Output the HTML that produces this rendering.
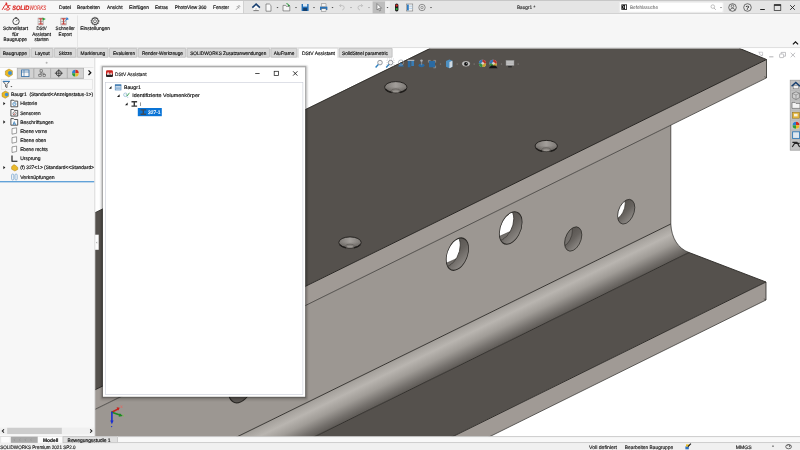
<!DOCTYPE html>
<html lang="de"><head><meta charset="utf-8"><title>SOLIDWORKS Premium 2021 SP2.0 - Baugr1</title>
<style>
html,body{margin:0;padding:0;background:#f4f4f4;overflow:hidden}
body{width:800px;height:450px}
svg{display:block;position:absolute;left:0;top:0;font-family:"Liberation Sans",sans-serif;will-change:transform}
text{white-space:pre;paint-order:stroke fill;stroke-linejoin:round}
</style></head><body>
<svg width="800" height="450" viewBox="0 0 800 450" text-rendering="geometricPrecision">
<g id="chrome-top">
<rect x="0" y="0" width="800" height="450" fill="#f4f4f4"/>
<rect x="0" y="0" width="800" height="14.4" fill="#e5e5e5"/>
<rect x="0" y="0" width="800" height="0.8" fill="#c0c0c0"/>
<rect x="0" y="1" width="243.4" height="12.4" fill="#f7f7f7"/>
<rect x="0" y="13.3" width="800" height="1.1" fill="#cbcbcb"/>
<rect x="243" y="1" width="0.7" height="12.4" fill="#c6c6c6"/>
<rect x="0" y="14.4" width="800" height="33.3" fill="#f6f6f6"/>
<rect x="0" y="14.4" width="800" height="0.8" fill="#fdfdfd"/>
<path d="M2.2,9.8 c1.4,-2.6 2.6,-4.8 4.6,-6.6 l-0.3,2 c1.6,-0.2 2.2,0.8 1.6,2 c-0.7,1.3 -2.3,2.1 -3.9,2.1 M5.4,3.2 l1.4,-0.4" fill="none" stroke="#dc1f1a" stroke-width="0.95"/>
<path d="M6.4,10 c2.2,0.2 3.3,-0.5 3.3,-1.4 c0,-1.1 -2.3,-0.8 -2.1,-2 c0.2,-0.9 1.5,-1.2 2.9,-1" fill="none" stroke="#dc1f1a" stroke-width="0.95"/>
<text x="12.20" y="9.94" font-size="6.4" fill="#dc1f1a" font-weight="bold" textLength="17.20" lengthAdjust="spacingAndGlyphs" font-style="italic" stroke="#dc1f1a" stroke-width="0.16">SOLID</text>
<text x="29.40" y="9.94" font-size="6.4" fill="#e03a34" textLength="16.80" lengthAdjust="spacingAndGlyphs" font-style="italic" stroke="#e03a34" stroke-width="0.08">WORKS</text>
<text x="59.00" y="9.45" font-size="5.0" fill="#111" textLength="12.00" lengthAdjust="spacingAndGlyphs" stroke="#111" stroke-width="0.16">Datei</text>
<text x="77.00" y="9.45" font-size="5.0" fill="#111" textLength="23.00" lengthAdjust="spacingAndGlyphs" stroke="#111" stroke-width="0.16">Bearbeiten</text>
<text x="107.00" y="9.45" font-size="5.0" fill="#111" textLength="15.50" lengthAdjust="spacingAndGlyphs" stroke="#111" stroke-width="0.16">Ansicht</text>
<text x="129.00" y="9.45" font-size="5.0" fill="#111" textLength="20.00" lengthAdjust="spacingAndGlyphs" stroke="#111" stroke-width="0.16">Einfügen</text>
<text x="155.00" y="9.45" font-size="5.0" fill="#111" textLength="13.00" lengthAdjust="spacingAndGlyphs" stroke="#111" stroke-width="0.16">Extras</text>
<text x="174.75" y="9.45" font-size="5.0" fill="#111" textLength="31.75" lengthAdjust="spacingAndGlyphs" stroke="#111" stroke-width="0.16">PhotoView 360</text>
<text x="213.00" y="9.45" font-size="5.0" fill="#111" textLength="16.00" lengthAdjust="spacingAndGlyphs" stroke="#111" stroke-width="0.16">Fenster</text>
<path d="M236,9.8 l1.6,-1.8 M237,6.4 l2,2 M237.6,7 l1.4,-1.6 l0.9,0.9 l-1.5,1.5" stroke="#6a6a6a" stroke-width="0.6" fill="none"/>
<path d="M253.4,7.4 v3.6 h5.4 v-3.6 l-2.7,-2.4 z" fill="#fafafa"/><path d="M253.4,10.6 h5.4" stroke="#6d6d6d" stroke-width="0.9"/><path d="M252.3,7.6 l3.8,-3.5 l3.8,3.5" fill="none" stroke="#173f70" stroke-width="1.5"/><path d="M255,9.4 q1.1,-1.4 2.2,0" fill="none" stroke="#888" stroke-width="0.5"/>
<path d="M266,4 h3.4 l1.6,1.6 v5.6 h-5 z" fill="#fafafa" stroke="#555" stroke-width="0.6"/>
<path d="M276.5,7.1 h2 l-1,1.2 z" fill="#444"/>
<path d="M283,5.4 h2.4 l0.8,0.9 h3.6 v4.6 h-6.8 z" fill="#f6f6f6" stroke="#555" stroke-width="0.6"/><path d="M286.4,3.6 q2.2,0 2.6,2.4 l-1,-0.2 m1,0.2 l0.5,-1" fill="none" stroke="#1e8c2f" stroke-width="0.9"/>
<path d="M295,7.1 h2 l-1,1.2 z" fill="#444"/>
<rect x="301.6" y="4" width="7" height="7" rx="0.6" fill="#1f6db5"/><rect x="303" y="4" width="4.2" height="2.6" fill="#dfe9f3"/><rect x="303.2" y="8" width="3.8" height="3" fill="#163f6b"/>
<path d="M313,7.1 h2 l-1,1.2 z" fill="#444"/>
<rect x="320" y="6.4" width="7.4" height="3.6" rx="0.5" fill="#2774bb"/><rect x="321.4" y="3.8" width="4.6" height="2.8" fill="#f2f2f2" stroke="#666" stroke-width="0.4"/><rect x="321.4" y="8.8" width="4.6" height="2.4" fill="#f2f2f2" stroke="#666" stroke-width="0.4"/>
<path d="M331.5,7.1 h2 l-1,1.2 z" fill="#444"/>
<path d="M339.6,5.6 h2.6 q2,0 2,2 q0,2 -2,2.4 M339.6,5.6 l1.4,-1.4 M339.6,5.6 l1.4,1.4" fill="none" stroke="#b9b9b9" stroke-width="0.8"/>
<path d="M350,7.1 h2 l-1,1.2 z" fill="#9a9a9a"/>
<path d="M362.6,5.6 h-2.6 q-2,0 -2,2 q0,2 2,2.4 M362.6,5.6 l-1.4,-1.4 M362.6,5.6 l-1.4,1.4" fill="none" stroke="#b9b9b9" stroke-width="0.8"/>
<path d="M368,7.1 h2 l-1,1.2 z" fill="#9a9a9a"/>
<rect x="372.6" y="1.4" width="12.6" height="12" fill="#bdbdbd"/><rect x="385.2" y="1.4" width="4.6" height="12" fill="#efefef"/>
<path d="M377,3.6 v6.4 l1.5,-1.4 l1.1,2.4 l1,-0.5 l-1.1,-2.3 h2 z" fill="#fafafa" stroke="#444" stroke-width="0.5"/>
<path d="M386.5,7.1 h2 l-1,1.2 z" fill="#444"/>
<rect x="395" y="3.4" width="3.4" height="8" rx="1.6" fill="#1c1c1c"/><circle cx="396.7" cy="5.6" r="1.15" fill="#e32b22"/><circle cx="396.7" cy="9.1" r="1.15" fill="#2fb344"/>
<rect x="406.4" y="4" width="6.4" height="7" fill="#f2f2f2" stroke="#666" stroke-width="0.5"/><rect x="407" y="4.6" width="1.8" height="5.8" fill="#2b7bc3"/><path d="M409.2,6.2 h3.4 M409.2,8.4 h3.4" stroke="#8fb8dd" stroke-width="0.6"/>
<circle cx="422" cy="7.5" r="3.2" fill="none" stroke="#6b6b6b" stroke-width="0.7"/><circle cx="422" cy="7.5" r="1.2" fill="none" stroke="#6b6b6b" stroke-width="0.6"/>
<path d="M430,7.1 h2 l-1,1.2 z" fill="#444"/>
<text x="516.90" y="9.35" font-size="5.0" fill="#333" textLength="18.40" lengthAdjust="spacingAndGlyphs" stroke="#333" stroke-width="0.16">Baugr1 *</text>
<rect x="618.8" y="1.8" width="105" height="11" rx="1.6" fill="#f1f1f1"/><rect x="619.4" y="2.3" width="103.8" height="10" rx="1.2" fill="#fefefe" stroke="#dadada" stroke-width="0.4"/>
<rect x="621.4" y="4.4" width="5.6" height="5.4" fill="#161616"/><path d="M622.4,5.4 l1.8,1.7 l-1.8,1.7" fill="none" stroke="#fff" stroke-width="0.6"/><rect x="625" y="5.2" width="1.2" height="3.8" fill="#fff"/>
<text x="630.00" y="9.45" font-size="5.0" fill="#6a6a6a" textLength="28.00" lengthAdjust="spacingAndGlyphs" stroke="#6a6a6a" stroke-width="0.05">Befehlssuche</text>
<circle cx="712.8" cy="6.6" r="1.8" fill="none" stroke="#9a9a9a" stroke-width="0.6"/><line x1="714" y1="8" x2="715.8" y2="9.8" stroke="#9a9a9a" stroke-width="0.7"/>
<path d="M720,7.1 h2 l-1,1.2 z" fill="#777"/>
<circle cx="732.5" cy="7.5" r="3.8" fill="none" stroke="#3a3a3a" stroke-width="0.7"/><circle cx="732.5" cy="6.3" r="1.3" fill="none" stroke="#3a3a3a" stroke-width="0.6"/><path d="M730.2,10.2 q0.3,-2 2.3,-2 q2,0 2.3,2" fill="none" stroke="#3a3a3a" stroke-width="0.6"/>
<circle cx="747.5" cy="7.5" r="3.8" fill="none" stroke="#3a3a3a" stroke-width="0.7"/>
<text x="747.5" y="9.7" font-size="6.2" font-weight="bold" fill="#222" text-anchor="middle">?</text>
<rect x="760.2" y="9" width="4.6" height="1" fill="#222"/>
<rect x="774.2" y="4.8" width="6.6" height="5.6" fill="none" stroke="#222" stroke-width="0.7"/><rect x="774.2" y="4.4" width="6.6" height="1.4" fill="#222"/>
<path d="M790.2,5.2 l4.6,4.6 M794.8,5.2 l-4.6,4.6" stroke="#222" stroke-width="0.9"/>
<circle cx="16" cy="21.4" r="3.2" fill="#fafafa" stroke="#2a2a2a" stroke-width="0.8"/><path d="M16,21.4 l1.6,-1.8 M14.8,17.6 h2.4" stroke="#2a2a2a" stroke-width="0.7"/>
<text x="3.00" y="30.15" font-size="5.0" fill="#111" textLength="25.00" lengthAdjust="spacingAndGlyphs" stroke="#111" stroke-width="0.16">Schnellstart</text>
<text x="12.20" y="35.55" font-size="5.0" fill="#111" textLength="6.40" lengthAdjust="spacingAndGlyphs" stroke="#111" stroke-width="0.16">für</text>
<text x="3.60" y="41.15" font-size="5.0" fill="#111" textLength="23.40" lengthAdjust="spacingAndGlyphs" stroke="#111" stroke-width="0.16">Baugruppe</text>
<rect x="38.0" y="18.0" width="5.6" height="7" fill="#e9e9e9" stroke="#8a8a8a" stroke-width="0.4"/><path d="M38.6,18.799999999999997 h4.4 M40.800000000000004,18.799999999999997 v5.2 M38.6,24.0 h4.4" stroke="#c2352f" stroke-width="1"/><path d="M38.6,21.599999999999998 h4.4" stroke="#6b6b6b" stroke-width="0.5"/>
<path d="M42.6,17.4 l3.2,1.7 l-3.2,1.7 z" fill="#29a33a"/>
<text x="36.40" y="30.15" font-size="5.0" fill="#111" textLength="10.20" lengthAdjust="spacingAndGlyphs" stroke="#111" stroke-width="0.16">DStV</text>
<text x="32.20" y="35.55" font-size="5.0" fill="#111" textLength="18.80" lengthAdjust="spacingAndGlyphs" stroke="#111" stroke-width="0.16">Assistant</text>
<text x="34.40" y="41.15" font-size="5.0" fill="#111" textLength="14.20" lengthAdjust="spacingAndGlyphs" stroke="#111" stroke-width="0.16">starten</text>
<rect x="60.800000000000004" y="18.0" width="5.6" height="7" fill="#e9e9e9" stroke="#8a8a8a" stroke-width="0.4"/><path d="M61.400000000000006,18.799999999999997 h4.4 M63.60000000000001,18.799999999999997 v5.2 M61.400000000000006,24.0 h4.4" stroke="#c2352f" stroke-width="1"/><path d="M61.400000000000006,21.599999999999998 h4.4" stroke="#6b6b6b" stroke-width="0.5"/>
<path d="M65.4,20.6 l2.4,-2.4 m0,0 h-1.8 m1.8,0 v1.8" stroke="#2b7bd0" stroke-width="1" fill="none"/>
<text x="55.60" y="30.15" font-size="5.0" fill="#111" textLength="19.20" lengthAdjust="spacingAndGlyphs" stroke="#111" stroke-width="0.16">Schneller</text>
<text x="58.60" y="35.55" font-size="5.0" fill="#111" textLength="13.20" lengthAdjust="spacingAndGlyphs" stroke="#111" stroke-width="0.16">Export</text>
<rect x="77.2" y="15.4" width="0.6" height="31.6" fill="#dcdcdc"/>
<circle cx="95" cy="21.2" r="3.3" fill="none" stroke="#2a2a2a" stroke-width="0.9"/><circle cx="95" cy="21.2" r="1.5" fill="none" stroke="#2a2a2a" stroke-width="0.6"/>
<circle cx="95" cy="21.2" r="3.9" fill="none" stroke="#2a2a2a" stroke-width="0.8" stroke-dasharray="1.1 0.95"/>
<text x="80.20" y="30.15" font-size="5.0" fill="#111" textLength="29.80" lengthAdjust="spacingAndGlyphs" stroke="#111" stroke-width="0.16">Einstellungen</text>
<path d="M792.9,44.4 l2.6,-2.6 l2.6,2.6" fill="none" stroke="#111" stroke-width="1.2"/>
<rect x="0" y="47.5" width="800" height="0.7" fill="#cbcbcb"/>
</g>
<g id="viewport">
<defs>
<linearGradient id="gfil" gradientUnits="userSpaceOnUse" x1="600.00" y1="258.74" x2="614.85" y2="289.00"><stop offset="0" stop-color="#a29e99"/><stop offset="0.28" stop-color="#b9b5b0"/><stop offset="0.55" stop-color="#a09c97"/><stop offset="0.82" stop-color="#76726e"/><stop offset="1" stop-color="#5e5a56"/></linearGradient>
<linearGradient id="gcs" x1="0" y1="0" x2="1" y2="0"><stop offset="0" stop-color="#7c7874"/><stop offset="0.5" stop-color="#a29e9a"/><stop offset="1" stop-color="#7c7874"/></linearGradient>
<linearGradient id="gcs2" x1="0" y1="0" x2="0" y2="1"><stop offset="0.45" stop-color="#3a3632" stop-opacity="0"/><stop offset="1" stop-color="#3a3632" stop-opacity="0.5"/></linearGradient>
<linearGradient id="gwall" x1="0.3" y1="0" x2="0.7" y2="1"><stop offset="0" stop-color="#56524e"/><stop offset="0.5" stop-color="#67635f"/><stop offset="1" stop-color="#8f8b87"/></linearGradient>
<clipPath id="vp"><rect x="95.0" y="48.5" width="705.0" height="387.9"/></clipPath>
</defs>
<rect x="95.0" y="48.1" width="705.0" height="388.29999999999995" fill="#fff"/>
<g clip-path="url(#vp)">
<polygon points="670.80,125.00 670.80,224.00 233.87,438.40 94.00,438.40 94.00,409.91" fill="#9c9792"/>
<path d="M670.8,224 C671.5,238 678,248.5 689,252.5 L311.15,438.4 L233.87,438.4 Z" fill="url(#gfil)"/>
<polygon points="689.00,252.50 766.00,282.00 449.14,438.40 311.15,438.40" fill="#55514d"/>
<polygon points="766.00,282.00 766.00,300.00 486.12,438.40 449.14,438.40" fill="#a09a95"/>
<polygon points="766.50,59.50 766.50,77.80 94.00,409.91 94.00,390.30" fill="#a09a95"/>
<polygon points="431.20,47.50 739.50,47.50 740.00,48.60 766.50,59.50 94.00,390.30 94.00,213.19" fill="#55514d"/>
<line x1="766.50" y1="59.50" x2="94.00" y2="390.30" stroke="#2b2926" stroke-width="1.0"/>
<line x1="766.30" y1="78.00" x2="94.00" y2="409.91" stroke="#2b2926" stroke-width="0.7"/>
<line x1="670.80" y1="224.00" x2="233.87" y2="438.40" stroke="#2b2926" stroke-width="0.9"/>
<line x1="689.00" y1="252.50" x2="311.15" y2="438.40" stroke="#2b2926" stroke-width="0.9"/>
<line x1="766.00" y1="282.00" x2="449.14" y2="438.40" stroke="#2b2926" stroke-width="0.95"/>
<line x1="766.00" y1="300.00" x2="486.12" y2="438.40" stroke="#2b2926" stroke-width="0.7"/>
<line x1="430.10" y1="48.50" x2="94.00" y2="213.19" stroke="#2b2926" stroke-width="0.8"/>
<line x1="739.50" y1="48.40" x2="766.50" y2="59.50" stroke="#2b2926" stroke-width="0.95"/>
<line x1="766.50" y1="59.50" x2="766.50" y2="78.00" stroke="#2b2926" stroke-width="0.8"/>
<line x1="766.00" y1="282.00" x2="766.00" y2="300.00" stroke="#2b2926" stroke-width="0.8"/>
<line x1="689.00" y1="252.50" x2="766.00" y2="282.00" stroke="#2b2926" stroke-width="0.9"/>
<line x1="670.80" y1="125.00" x2="670.80" y2="224.00" stroke="#2b2926" stroke-width="0.7"/>
<path d="M670.8,224 C671.5,238 678,248.5 689,252.5" fill="none" stroke="#2b2926" stroke-width="0.7"/>
<line x1="766.50" y1="77.80" x2="764.30" y2="76.60" stroke="#2b2926" stroke-width="0.5"/>
<line x1="766.00" y1="300.00" x2="763.80" y2="298.80" stroke="#2b2926" stroke-width="0.5"/>
<ellipse cx="395.8" cy="87.2" rx="11.2" ry="5.6" fill="url(#gcs)" stroke="#1f1d1b" stroke-width="0.9"/>
<ellipse cx="395.8" cy="87.2" rx="10.799999999999999" ry="5.199999999999999" fill="url(#gcs2)"/>
<path d="M406.18,89.30 A11.2,5.6 0 0 1 400.00,92.39" fill="none" stroke="#1f1d1b" stroke-width="1.5"/>
<path d="M391.60,92.39 A11.2,5.6 0 0 1 385.42,89.30" fill="none" stroke="#1f1d1b" stroke-width="1.5"/>
<ellipse cx="395.8" cy="90.7" rx="4.3" ry="1.9" fill="#827e7a" stroke="#55514d" stroke-width="0.5"/>
<ellipse cx="395.8" cy="91.4" rx="3.0" ry="0.9" fill="#98948f"/>
<ellipse cx="546.25" cy="146.0" rx="11.2" ry="5.6" fill="url(#gcs)" stroke="#1f1d1b" stroke-width="0.9"/>
<ellipse cx="546.25" cy="146.0" rx="10.799999999999999" ry="5.199999999999999" fill="url(#gcs2)"/>
<path d="M556.63,148.10 A11.2,5.6 0 0 1 550.45,151.19" fill="none" stroke="#1f1d1b" stroke-width="1.5"/>
<path d="M542.05,151.19 A11.2,5.6 0 0 1 535.87,148.10" fill="none" stroke="#1f1d1b" stroke-width="1.5"/>
<ellipse cx="546.25" cy="149.5" rx="4.3" ry="1.9" fill="#827e7a" stroke="#55514d" stroke-width="0.5"/>
<ellipse cx="546.25" cy="150.2" rx="3.0" ry="0.9" fill="#98948f"/>
<ellipse cx="350.0" cy="242.5" rx="11.2" ry="5.6" fill="url(#gcs)" stroke="#1f1d1b" stroke-width="0.9"/>
<ellipse cx="350.0" cy="242.5" rx="10.799999999999999" ry="5.199999999999999" fill="url(#gcs2)"/>
<path d="M360.38,244.60 A11.2,5.6 0 0 1 354.20,247.69" fill="none" stroke="#1f1d1b" stroke-width="1.5"/>
<path d="M345.80,247.69 A11.2,5.6 0 0 1 339.62,244.60" fill="none" stroke="#1f1d1b" stroke-width="1.5"/>
<ellipse cx="350.0" cy="246.0" rx="4.3" ry="1.9" fill="#827e7a" stroke="#55514d" stroke-width="0.5"/>
<ellipse cx="350.0" cy="246.7" rx="3.0" ry="0.9" fill="#98948f"/>
<clipPath id="hc1"><circle r="1" transform="matrix(11.2,-5.4879999999999995,0,15.2,457.4,254.1)"/></clipPath>
<circle r="1" transform="matrix(11.2,-5.4879999999999995,0,15.2,457.4,254.1)" fill="url(#gwall)"/>
<clipPath id="hb1"><circle r="1" transform="matrix(11.2,-5.4879999999999995,0,15.2,449.09999999999997,250.5)"/></clipPath>
<g clip-path="url(#hc1)">
<circle r="1" transform="matrix(11.2,-5.4879999999999995,0,15.2,449.09999999999997,250.5)" fill="#fff"/>
<g clip-path="url(#hb1)"><polygon points="412.0,284.6 492.0,248.60000000000002 492.0,320.6 412.0,320.6" fill="#736f6b" transform="translate(0,-6)"/><line x1="412.0" y1="278.6" x2="492.0" y2="242.60000000000002" stroke="#3a3733" stroke-width="0.5"/></g>
<circle r="1" transform="matrix(11.2,-5.4879999999999995,0,15.2,449.09999999999997,250.5)" fill="none" stroke="#3a3733" stroke-width="0.06"/>
</g>
<circle r="1" transform="matrix(11.2,-5.4879999999999995,0,15.2,457.4,254.1)" fill="none" stroke="#2b2926" stroke-width="0.07"/>
<clipPath id="hc2"><circle r="1" transform="matrix(11.4,-5.586,0,15.2,510.7,228.0)"/></clipPath>
<circle r="1" transform="matrix(11.4,-5.586,0,15.2,510.7,228.0)" fill="url(#gwall)"/>
<clipPath id="hb2"><circle r="1" transform="matrix(11.4,-5.586,0,15.2,502.4,224.4)"/></clipPath>
<g clip-path="url(#hc2)">
<circle r="1" transform="matrix(11.4,-5.586,0,15.2,502.4,224.4)" fill="#fff"/>
<g clip-path="url(#hb2)"><polygon points="465.5,257.6 545.5,221.6 545.5,293.6 465.5,293.6" fill="#736f6b" transform="translate(0,-6)"/><line x1="465.5" y1="251.6" x2="545.5" y2="215.6" stroke="#3a3733" stroke-width="0.5"/></g>
<circle r="1" transform="matrix(11.4,-5.586,0,15.2,502.4,224.4)" fill="none" stroke="#3a3733" stroke-width="0.06"/>
</g>
<circle r="1" transform="matrix(11.4,-5.586,0,15.2,510.7,228.0)" fill="none" stroke="#2b2926" stroke-width="0.07"/>
<clipPath id="hc3"><circle r="1" transform="matrix(8.6,-4.2139999999999995,0,11.4,573.2,239.0)"/></clipPath>
<circle r="1" transform="matrix(8.6,-4.2139999999999995,0,11.4,573.2,239.0)" fill="url(#gwall)"/>
<clipPath id="hb3"><circle r="1" transform="matrix(8.6,-4.2139999999999995,0,11.4,563.8000000000001,235.0)"/></clipPath>
<g clip-path="url(#hc3)">
<circle r="1" transform="matrix(8.6,-4.2139999999999995,0,11.4,563.8000000000001,235.0)" fill="#75716d"/>
<circle r="1" transform="matrix(8.6,-4.2139999999999995,0,11.4,563.8000000000001,235.0)" fill="none" stroke="#3a3733" stroke-width="0.06"/>
</g>
<circle r="1" transform="matrix(8.6,-4.2139999999999995,0,11.4,573.2,239.0)" fill="none" stroke="#2b2926" stroke-width="0.07"/>
<clipPath id="hc4"><circle r="1" transform="matrix(8.6,-4.2139999999999995,0,11.6,626.2,211.7)"/></clipPath>
<circle r="1" transform="matrix(8.6,-4.2139999999999995,0,11.6,626.2,211.7)" fill="url(#gwall)"/>
<clipPath id="hb4"><circle r="1" transform="matrix(8.6,-4.2139999999999995,0,11.6,616.6,207.6)"/></clipPath>
<g clip-path="url(#hc4)">
<circle r="1" transform="matrix(8.6,-4.2139999999999995,0,11.6,616.6,207.6)" fill="#fff"/>
<circle r="1" transform="matrix(8.6,-4.2139999999999995,0,11.6,616.6,207.6)" fill="none" stroke="#3a3733" stroke-width="0.06"/>
</g>
<circle r="1" transform="matrix(8.6,-4.2139999999999995,0,11.6,626.2,211.7)" fill="none" stroke="#2b2926" stroke-width="0.07"/>
<clipPath id="hc5"><circle r="1" transform="matrix(12.6,-6.1739999999999995,0,16.4,241.2,385.3)"/></clipPath>
<circle r="1" transform="matrix(12.6,-6.1739999999999995,0,16.4,241.2,385.3)" fill="#5d5955"/>
<clipPath id="hb5"><circle r="1" transform="matrix(12.6,-6.1739999999999995,0,16.4,211.2,373.3)"/></clipPath>
<g clip-path="url(#hc5)">
<circle r="1" transform="matrix(12.6,-6.1739999999999995,0,16.4,211.2,373.3)" fill="#6a6662"/>
<circle r="1" transform="matrix(12.6,-6.1739999999999995,0,16.4,211.2,373.3)" fill="none" stroke="#3a3733" stroke-width="0.06"/>
</g>
<circle r="1" transform="matrix(12.6,-6.1739999999999995,0,16.4,241.2,385.3)" fill="none" stroke="#2b2926" stroke-width="0.07"/>
</g>
<circle cx="380" cy="62.6" r="2.3" fill="#f4f4f4" stroke="#8a8f96" stroke-width="0.9"/><line x1="378.3" y1="64.6" x2="375.6" y2="67.4" stroke="#2c7fc0" stroke-width="1.4"/>
<circle cx="390.6" cy="62.6" r="2.3" fill="#f4f4f4" stroke="#8a8f96" stroke-width="0.9"/><line x1="388.9" y1="64.6" x2="386.2" y2="67.4" stroke="#2c7fc0" stroke-width="1.4"/><rect x="387" y="59" width="7" height="7" fill="none" stroke="#9aa0a8" stroke-width="0.4" stroke-dasharray="1 1"/>
<path d="M398,66.4 l3,-4 l3,4 z" fill="#2f72ad"/><circle cx="401" cy="62.5" r="2.6" fill="none" stroke="#9aa0a8" stroke-width="0.7"/>
<rect x="407.8" y="60.6" width="2.7" height="6.7" fill="#2a6aa2"/><rect x="411.3" y="60.6" width="2.7" height="5.4" fill="#397cb4"/><rect x="407.5" y="59.8" width="6.8" height="1.1" fill="#b4b9bf"/>
<path d="M418.2,65.8 q3.3,3 6.6,0 l-1,-1.8 h-4.6 z" fill="#2a6aa2"/><rect x="420.9" y="60.6" width="1.3" height="4.6" fill="#7d8690"/><circle cx="421.5" cy="60.6" r="1.2" fill="#aab0b7"/>
<rect x="429" y="61" width="6" height="6.3" fill="#2a6aa2"/><path d="M428.4,62.6 v-2.2 h2.2 M433.4,60.4 h2.2 v2.2 M435.6,65.6 v2.2 h-2.2" fill="none" stroke="#a8aeb5" stroke-width="0.6"/>
<path d="M446,61 l3.4,-1.5 l3,1.3 v5.9 l-3,1.5 l-3.4,-1.5 z" fill="#4d8fc0"/><path d="M449.4,62.1 l3,-1.3 v5.9 l-3,1.5 z" fill="#cfd9e2"/>
<ellipse cx="466" cy="63.8" rx="3.7" ry="2.4" fill="#b9b9b9" stroke="#dadada" stroke-width="0.5"/><circle cx="466" cy="63.9" r="1.9" fill="#151515"/><circle cx="466.5" cy="63.3" r="0.5" fill="#bbb"/>
<circle cx="482.5" cy="63.4" r="3.6" fill="#d9d9d9" opacity="0.9"/><path d="M482.5,63.4 L478.9,63.4 A3.6,3.6 0 0 1 482.5,59.8 Z" fill="#2d7fd1"/><path d="M482.5,63.4 L482.5,59.8 A3.6,3.6 0 0 1 486.1,63.4 Z" fill="#d32a20"/><path d="M482.5,63.4 L478.9,63.4 A3.6,3.6 0 0 0 482.5,67 Z" fill="#2e9a3a"/><path d="M482.5,63.4 L482.5,67 A3.6,3.6 0 0 0 486.1,63.4 Z" fill="#e7b928"/><circle cx="482.5" cy="63.4" r="3.6" fill="#55514d" opacity="0.22"/><circle cx="482.7" cy="63.2" r="1.3" fill="#eee" opacity="0.75"/>
<circle cx="493.2" cy="63.4" r="3.6" fill="#d9d9d9" opacity="0.9"/><path d="M493.2,63.4 L489.59999999999997,63.4 A3.6,3.6 0 0 1 493.2,59.8 Z" fill="#2d7fd1"/><path d="M493.2,63.4 L493.2,59.8 A3.6,3.6 0 0 1 496.8,63.4 Z" fill="#d32a20"/><path d="M493.2,63.4 L489.59999999999997,63.4 A3.6,3.6 0 0 0 493.2,67 Z" fill="#2e9a3a"/><path d="M493.2,63.4 L493.2,67 A3.6,3.6 0 0 0 496.8,63.4 Z" fill="#e7b928"/><circle cx="493.2" cy="63.4" r="3.6" fill="#55514d" opacity="0.22"/><circle cx="493.4" cy="63.2" r="1.3" fill="#eee" opacity="0.75"/>
<path d="M488.8,68.2 l2.2,-2.6 h4.4 l2.2,2.6 z" fill="#141414"/>
<rect x="506" y="60.4" width="8" height="5" fill="#c4c4c4" stroke="#8d8d8d" stroke-width="0.5"/><path d="M506,62 h8 M506,63.6 h8" stroke="#a2a2a2" stroke-width="0.4"/><rect x="508.2" y="66" width="3.6" height="1.4" fill="#2a2a2a"/>
<rect x="439.9" y="63.6" width="1.2" height="0.9" fill="#8c8884"/>
<rect x="456.59999999999997" y="63.6" width="1.2" height="0.9" fill="#8c8884"/>
<rect x="473.59999999999997" y="63.6" width="1.2" height="0.9" fill="#8c8884"/>
<rect x="500.9" y="63.6" width="1.2" height="0.9" fill="#8c8884"/>
<rect x="517.6" y="63.6" width="1.2" height="0.9" fill="#8c8884"/>
<rect x="769.2" y="56.4" width="4.2" height="0.9" fill="#a9a9ad"/>
<rect x="779.6" y="54" width="4" height="3.6" rx="0.5" fill="#fff" stroke="#a9a9ad" stroke-width="0.7"/><path d="M781.2,53.8 v-1.4 h4.3 v3.8 h-1.6" fill="none" stroke="#a9a9ad" stroke-width="0.7"/>
<path d="M790.7,52.8 l4.4,4.4 M795.1,52.8 l-4.4,4.4" stroke="#a9a9ad" stroke-width="0.75"/>
<path d="M758.4,52.2 h4.2 v3.4 h-2 M759.6,52.2 v2.4" fill="none" stroke="#b4b4b8" stroke-width="0.6"/><path d="M760.4,54.4 l1,1.2 l1,-1.2" fill="none" stroke="#a0a0a4" stroke-width="0.5"/>
<rect x="95" y="234.7" width="3.7" height="15.1" fill="#fdfdfd"/><path d="M97.2,241.4 l-1.2,1.2 l1.2,1.2 z" fill="#9a9a9a"/>
<g stroke-linecap="round"><line x1="111.9" y1="412.3" x2="118.2" y2="408.9" stroke="#c8201c" stroke-width="1.6"/><path d="M116.6,407.2 l3.2,0.6 l-1.8,2.9 z" fill="#c8201c"/><line x1="111.9" y1="412.3" x2="120.5" y2="415.2" stroke="#1d8a22" stroke-width="1.6"/><path d="M119.8,413.2 l3,2.9 l-4.2,0.6 z" fill="#1d8a22"/><line x1="111.9" y1="412.3" x2="111.9" y2="421.5" stroke="#1b2fd0" stroke-width="1.6"/><path d="M110.2,420.4 h3.4 l-1.7,3.9 z" fill="#1b2fd0"/><circle cx="111.6" cy="426.6" r="0.7" fill="#1b2fd0"/></g>
<text x="120.20" y="408.26" font-size="3.6" fill="#e8665f" textLength="2.40" lengthAdjust="spacingAndGlyphs" stroke="#e8665f" stroke-width="0.16">X</text>
<text x="122.40" y="417.46" font-size="3.6" fill="#7fc04a" textLength="1.80" lengthAdjust="spacingAndGlyphs" stroke="#7fc04a" stroke-width="0.16">Y</text>
<rect x="790.2" y="80.2" width="10" height="70" fill="#c2c2c2" stroke="#9a9a9a" stroke-width="0.7"/>
<line x1="790.6" y1="90.4" x2="800" y2="90.4" stroke="#a9a9a9" stroke-width="0.4"/>
<line x1="790.6" y1="100.2" x2="800" y2="100.2" stroke="#a9a9a9" stroke-width="0.4"/>
<line x1="790.6" y1="110.3" x2="800" y2="110.3" stroke="#a9a9a9" stroke-width="0.4"/>
<line x1="790.6" y1="120.2" x2="800" y2="120.2" stroke="#a9a9a9" stroke-width="0.4"/>
<line x1="790.6" y1="130.1" x2="800" y2="130.1" stroke="#a9a9a9" stroke-width="0.4"/>
<line x1="790.6" y1="139.6" x2="800" y2="139.6" stroke="#a9a9a9" stroke-width="0.4"/>
<rect x="793.2" y="85.4" width="5.4" height="3.4" fill="#f0f0f0" stroke="#6a6a6a" stroke-width="0.5"/><path d="M791.6,86.2 l4.2,-3.7 l4.2,3.7" fill="none" stroke="#173f70" stroke-width="1.5"/>
<path d="M792.4,93.4 l3.6,-1.6 l3.4,1.4 v4.6 l-3.4,1.7 l-3.6,-1.7 z" fill="#cfcfcf" stroke="#6a6a6a" stroke-width="0.6"/><path d="M792.4,93.4 l3.6,1.6 l3.4,-1.8 M796,95 v4.4" fill="none" stroke="#6a6a6a" stroke-width="0.5"/>
<path d="M792,102.4 h3 l1,1 h4 v5 h-8 z" fill="#f3f3f3" stroke="#555" stroke-width="0.6"/>
<rect x="792.4" y="112.2" width="7" height="6" fill="#e3b53c" stroke="#8a6a1c" stroke-width="0.5"/><rect x="794" y="113.8" width="3.6" height="2.6" fill="#f7f1dc"/>
<circle cx="796" cy="125.2" r="3.5" fill="#f4f4f4"/><path d="M796,125.2 L792.5,125.2 A3.5,3.5 0 0 1 796,121.7 Z" fill="#2d7fd1"/><path d="M796,125.2 L796,121.7 A3.5,3.5 0 0 1 799.5,125.2 Z" fill="#d32a20"/><path d="M796,125.2 L792.5,125.2 A3.5,3.5 0 0 0 796,128.7 Z" fill="#2e9a3a"/><path d="M796,125.2 L796,128.7 A3.5,3.5 0 0 0 799.5,125.2 Z" fill="#e7b928"/>
<rect x="792.6" y="131.8" width="7" height="6.6" fill="#dfe7ef" stroke="#2f78b5" stroke-width="0.9"/>
<path d="M792.2,147 l2.4,-3.6 h5 M792.4,142.4 h4.6 l2.6,4.6" fill="none" stroke="#222" stroke-width="1.1"/>
</g>
<g id="chrome-mid">
<rect x="0" y="47.6" width="392.6" height="10.2" fill="#ececec"/>
<rect x="0" y="57.4" width="95" height="0.6" fill="#d2d2d2"/>
<rect x="-0.3" y="48.3" width="30.0" height="8.9" rx="0.6" fill="#d9d9d9" stroke="#b2b2b2" stroke-width="0.6"/>
<rect x="31.1" y="48.3" width="21.8" height="8.9" rx="0.6" fill="#d9d9d9" stroke="#b2b2b2" stroke-width="0.6"/>
<rect x="54.3" y="48.3" width="21.6" height="8.9" rx="0.6" fill="#d9d9d9" stroke="#b2b2b2" stroke-width="0.6"/>
<rect x="77.3" y="48.3" width="30.8" height="8.9" rx="0.6" fill="#d9d9d9" stroke="#b2b2b2" stroke-width="0.6"/>
<rect x="109.5" y="48.3" width="27.4" height="8.9" rx="0.6" fill="#d9d9d9" stroke="#b2b2b2" stroke-width="0.6"/>
<rect x="138.3" y="48.3" width="47.4" height="8.9" rx="0.6" fill="#d9d9d9" stroke="#b2b2b2" stroke-width="0.6"/>
<rect x="187.1" y="48.3" width="82.4" height="8.9" rx="0.6" fill="#d9d9d9" stroke="#b2b2b2" stroke-width="0.6"/>
<rect x="270.9" y="48.3" width="26.0" height="8.9" rx="0.6" fill="#d9d9d9" stroke="#b2b2b2" stroke-width="0.6"/>
<rect x="298.3" y="48.2" width="39.6" height="9.8" fill="#ffffff"/>
<path d="M298.3,57.8 v-9.5 h39.6 v9.5" fill="none" stroke="#c4c4c4" stroke-width="0.5"/>
<rect x="339.3" y="48.3" width="52.8" height="8.9" rx="0.6" fill="#d9d9d9" stroke="#b2b2b2" stroke-width="0.6"/>
<text x="2.75" y="54.75" font-size="5.0" fill="#111" textLength="24.15" lengthAdjust="spacingAndGlyphs" stroke="#111" stroke-width="0.16">Baugruppe</text>
<text x="34.75" y="54.75" font-size="5.0" fill="#111" textLength="15.00" lengthAdjust="spacingAndGlyphs" stroke="#111" stroke-width="0.16">Layout</text>
<text x="58.75" y="54.75" font-size="5.0" fill="#111" textLength="13.15" lengthAdjust="spacingAndGlyphs" stroke="#111" stroke-width="0.16">Skizze</text>
<text x="80.60" y="54.75" font-size="5.0" fill="#111" textLength="24.60" lengthAdjust="spacingAndGlyphs" stroke="#111" stroke-width="0.16">Markierung</text>
<text x="113.00" y="54.75" font-size="5.0" fill="#111" textLength="22.00" lengthAdjust="spacingAndGlyphs" stroke="#111" stroke-width="0.16">Evaluieren</text>
<text x="141.90" y="54.75" font-size="5.0" fill="#111" textLength="41.10" lengthAdjust="spacingAndGlyphs" stroke="#111" stroke-width="0.16">Render-Werkzeuge</text>
<text x="190.25" y="54.75" font-size="5.0" fill="#111" textLength="76.00" lengthAdjust="spacingAndGlyphs" stroke="#111" stroke-width="0.16">SOLIDWORKS Zusatzanwendungen</text>
<text x="273.75" y="54.75" font-size="5.0" fill="#111" textLength="20.65" lengthAdjust="spacingAndGlyphs" stroke="#111" stroke-width="0.16">AluFrame</text>
<text x="301.90" y="54.75" font-size="5.0" fill="#111" textLength="33.10" lengthAdjust="spacingAndGlyphs" stroke="#111" stroke-width="0.16">DStV Assistant</text>
<text x="341.90" y="54.75" font-size="5.0" fill="#111" textLength="46.10" lengthAdjust="spacingAndGlyphs" stroke="#111" stroke-width="0.16">SolidSteel parametric</text>
<rect x="0" y="57.9" width="95" height="378.6" fill="#f7f7f7"/>
<rect x="93.6" y="57.9" width="1.4" height="378.6" fill="#fbfbfb"/>
<rect x="94.3" y="57.9" width="1" height="378.6" fill="#d9d9d9"/>
<circle cx="46.6" cy="62.7" r="1" fill="#b4b4b4"/>
<rect x="0" y="67.3" width="93.4" height="0.6" fill="#dcdcdc"/>
<rect x="0" y="68" width="16.8" height="10.6" fill="#fdfdfd"/>
<rect x="16.8" y="78.2" width="67" height="0.6" fill="#adadad"/>
<rect x="17.2" y="68.2" width="16.3" height="10" fill="#d2d2d2" stroke="#a6a6a6" stroke-width="0.6"/>
<rect x="34" y="68.2" width="16.3" height="10" fill="#d2d2d2" stroke="#a6a6a6" stroke-width="0.6"/>
<rect x="50.8" y="68.2" width="16.3" height="10" fill="#d2d2d2" stroke="#a6a6a6" stroke-width="0.6"/>
<rect x="67.4" y="68.2" width="16.3" height="10" fill="#d2d2d2" stroke="#a6a6a6" stroke-width="0.6"/>
<path d="M5.4,71 l3.6,-2 l3.4,1.8 v4 l-3.6,2.2 l-3.4,-2 z" fill="#e9b824" stroke="#9a7410" stroke-width="0.4"/><circle cx="10" cy="73" r="2" fill="#3f8fd6"/>
<rect x="21.6" y="70" width="7.4" height="6.6" fill="#f4f4f4" stroke="#2c6aa6" stroke-width="0.8"/><path d="M21.6,72 h7.4 M24,70 v6.6" stroke="#2c6aa6" stroke-width="0.6"/>
<rect x="40" y="69.8" width="2.6" height="2.2" fill="none" stroke="#444" stroke-width="0.5"/><rect x="38.8" y="74.4" width="2.4" height="2.2" fill="none" stroke="#444" stroke-width="0.5"/><rect x="43" y="74.4" width="2.4" height="2.2" fill="none" stroke="#444" stroke-width="0.5"/><path d="M41.3,72 v1.2 h-1.3 v1.2 M41.3,73.2 h2.9 v1.2" fill="none" stroke="#444" stroke-width="0.5"/>
<circle cx="58.8" cy="73.2" r="2.6" fill="none" stroke="#222" stroke-width="0.8"/><path d="M58.8,69.2 v8 M54.8,73.2 h8" stroke="#222" stroke-width="0.7"/>
<circle cx="75.4" cy="73.2" r="3.4" fill="#eee"/><path d="M75.4,73.2 L72,73.2 A3.4,3.4 0 0 1 75.4,69.8 Z" fill="#2d7fd1"/><path d="M75.4,73.2 L75.4,69.8 A3.4,3.4 0 0 1 78.8,73.2 Z" fill="#d32a20"/><path d="M75.4,73.2 L72,73.2 A3.4,3.4 0 0 0 75.4,76.6 Z" fill="#2e9a3a"/><path d="M75.4,73.2 L75.4,76.6 A3.4,3.4 0 0 0 78.8,73.2 Z" fill="#e7b928"/>
<path d="M88.5,70.4 l2.3,2.3 l-2.3,2.3" fill="none" stroke="#111" stroke-width="1.25"/>
<rect x="1.4" y="79.4" width="91.2" height="9.8" fill="#f9f9f9" stroke="#d6d6d6" stroke-width="0.5"/>
<path d="M3.2,81.6 h6.2 l-2.4,2.8 v3.2 l-1.5,-0.9 v-2.3 z" fill="#fdfdfd" stroke="#2a2a2a" stroke-width="0.7"/><path d="M2.8,81.3 h7" stroke="#2f7cc4" stroke-width="1"/><path d="M10.4,86.2 h2 l-1,1.1 z" fill="#222"/>
<text x="11.00" y="96.25" font-size="5.0" fill="#111" textLength="82.00" lengthAdjust="spacingAndGlyphs" stroke="#111" stroke-width="0.16">Baugr1  (Standard&lt;Anzeigestatus-1&gt;)</text>
<text x="20.20" y="105.35" font-size="5.0" fill="#111" textLength="17.00" lengthAdjust="spacingAndGlyphs" stroke="#111" stroke-width="0.16">Historie</text>
<text x="20.20" y="114.65" font-size="5.0" fill="#111" textLength="20.40" lengthAdjust="spacingAndGlyphs" stroke="#111" stroke-width="0.16">Sensoren</text>
<text x="20.20" y="123.75" font-size="5.0" fill="#111" textLength="33.40" lengthAdjust="spacingAndGlyphs" stroke="#111" stroke-width="0.16">Beschriftungen</text>
<text x="20.20" y="132.95" font-size="5.0" fill="#111" textLength="27.00" lengthAdjust="spacingAndGlyphs" stroke="#111" stroke-width="0.16">Ebene vorne</text>
<text x="20.20" y="141.95" font-size="5.0" fill="#111" textLength="26.00" lengthAdjust="spacingAndGlyphs" stroke="#111" stroke-width="0.16">Ebene oben</text>
<text x="20.20" y="151.25" font-size="5.0" fill="#111" textLength="27.80" lengthAdjust="spacingAndGlyphs" stroke="#111" stroke-width="0.16">Ebene rechts</text>
<text x="20.20" y="160.35" font-size="5.0" fill="#111" textLength="20.40" lengthAdjust="spacingAndGlyphs" stroke="#111" stroke-width="0.16">Ursprung</text>
<text x="20.20" y="169.35" font-size="5.0" fill="#111" textLength="73.80" lengthAdjust="spacingAndGlyphs" stroke="#111" stroke-width="0.16">(f) 327&lt;1&gt; (Standard&lt;&lt;Standard&gt;</text>
<text x="20.20" y="178.85" font-size="5.0" fill="#111" textLength="34.40" lengthAdjust="spacingAndGlyphs" stroke="#111" stroke-width="0.16">Verknüpfungen</text>
<path d="M2,93 l3.4,-2 l3.2,1.7 v3.6 l-3.4,2 l-3.2,-1.8 z" fill="#e9b824" stroke="#9a7410" stroke-width="0.4"/><circle cx="6.6" cy="94.6" r="1.8" fill="#3f8fd6"/>
<path d="M3.3,101.89999999999999 l2.1,1.7 l-2.1,1.7 z" fill="#1c1c1c"/>
<path d="M3.3,120.3 l2.1,1.7 l-2.1,1.7 z" fill="#1c1c1c"/>
<path d="M3.3,165.9 l2.1,1.7 l-2.1,1.7 z" fill="#1c1c1c"/>
<path d="M10.9,100.2 h2.6 l0.8,0.9 h3.4 v5.7 h-6.8 z" fill="#fbfbfb" stroke="#2f2f2f" stroke-width="0.8" stroke-linejoin="round"/><circle cx="14.4" cy="104" r="1.6" fill="none" stroke="#2f78b5" stroke-width="0.7"/><path d="M14.4,104 v-1 M14.4,104 h0.8" stroke="#2f78b5" stroke-width="0.4"/>
<path d="M10.9,109.5 h2.6 l0.8,0.9 h3.4 v5.7 h-6.8 z" fill="#fbfbfb" stroke="#2f2f2f" stroke-width="0.8" stroke-linejoin="round"/><circle cx="14.6" cy="113.4" r="1.6" fill="none" stroke="#444" stroke-width="0.6"/><path d="M14.6,113.4 l-1,1.4" stroke="#d32a20" stroke-width="0.8"/>
<path d="M10.9,118.6 h2.6 l0.8,0.9 h3.4 v5.7 h-6.8 z" fill="#fbfbfb" stroke="#2f2f2f" stroke-width="0.8" stroke-linejoin="round"/>
<text x="14.4" y="124.6" font-size="5" font-weight="bold" fill="#2f78b5" text-anchor="middle">A</text>
<path d="M12,128.6 l4.6,-0.8 v5.4 l-4.6,1 z" fill="#fcfcfc" stroke="#555" stroke-width="0.55"/>
<path d="M12,137.6 l4.6,-0.8 v5.4 l-4.6,1 z" fill="#fcfcfc" stroke="#555" stroke-width="0.55"/>
<path d="M12,146.9 l4.6,-0.8 v5.4 l-4.6,1 z" fill="#fcfcfc" stroke="#555" stroke-width="0.55"/>
<path d="M12,155.4 v5.8 h5.4" fill="none" stroke="#111" stroke-width="1.1"/>
<path d="M11.6,166.6 l2.4,-2 l2,1.2 l1.8,1.6 v2 l-3,1.6 l-3.2,-1.8 z" fill="#eab92a" stroke="#9a7410" stroke-width="0.4"/>
<rect x="11.6" y="174" width="2.2" height="6" rx="1.1" fill="none" stroke="#7ea9d2" stroke-width="0.8"/><rect x="15" y="174" width="2.2" height="6" rx="1.1" fill="none" stroke="#7ea9d2" stroke-width="0.8"/>
<rect x="0" y="181.2" width="94.2" height="1.1" fill="#3c8dd0"/>
<rect x="0" y="427.6" width="94" height="6.8" fill="#f0f0f0"/><rect x="7.2" y="427.8" width="54.6" height="6.2" fill="#cdcdcd"/>
<path d="M4,429.3 l-1.7,1.7 l1.7,1.7" fill="none" stroke="#1a1a1a" stroke-width="1.05"/><path d="M90.2,429.3 l1.7,1.7 l-1.7,1.7" fill="none" stroke="#1a1a1a" stroke-width="1.05"/>
<rect x="0" y="436.2" width="800" height="1.1" fill="#c6c6c6"/>
<rect x="0" y="437.2" width="800" height="5.2" fill="#f8f8f8"/>
<rect x="0" y="442.2" width="800" height="1.1" fill="#c6c6c6"/>
<rect x="0" y="443.1" width="800" height="7" fill="#f0f0f0"/>
<rect x="0" y="436.4" width="118" height="6.6" fill="#e8e8e8"/>
<rect x="1.2" y="437" width="8.6" height="5.6" fill="#fcfcfc"/>
<rect x="11" y="436.8" width="26.6" height="6" fill="#a9a9a9"/>
<path d="M15,438.6 l-1,1.2 l1,1.2" fill="none" stroke="#8d8d8d" stroke-width="0.5"/>
<path d="M20.4,438.6 l-1,1.2 l1,1.2" fill="none" stroke="#8d8d8d" stroke-width="0.5"/>
<path d="M26,438.6 l-1,1.2 l1,1.2" fill="none" stroke="#8d8d8d" stroke-width="0.5"/>
<path d="M31.6,438.6 l-1,1.2 l1,1.2" fill="none" stroke="#8d8d8d" stroke-width="0.5"/>
<rect x="38" y="436.6" width="24.4" height="6.2" fill="#fdfdfd"/>
<text x="43.00" y="441.55" font-size="5.0" fill="#111" font-weight="bold" textLength="15.40" lengthAdjust="spacingAndGlyphs" stroke="#111" stroke-width="0.16">Modell</text>
<rect x="63" y="436.8" width="54.4" height="6" fill="#e0e0e0" stroke="#b4b4b4" stroke-width="0.5"/>
<text x="67.60" y="441.55" font-size="5.0" fill="#111" textLength="43.00" lengthAdjust="spacingAndGlyphs" stroke="#111" stroke-width="0.16">Bewegungsstudie 1</text>
<text x="0.20" y="448.65" font-size="5.0" fill="#222" textLength="75.40" lengthAdjust="spacingAndGlyphs" stroke="#222" stroke-width="0.16">SOLIDWORKS Premium 2021 SP2.0</text>
<text x="589.00" y="448.65" font-size="5.0" fill="#222" textLength="28.00" lengthAdjust="spacingAndGlyphs" stroke="#222" stroke-width="0.16">Voll definiert</text>
<text x="624.80" y="448.65" font-size="5.0" fill="#222" textLength="48.40" lengthAdjust="spacingAndGlyphs" stroke="#222" stroke-width="0.16">Bearbeiten Baugruppe</text>
<rect x="685.4" y="446.4" width="3.4" height="2.9" fill="#2f72c2"/><rect x="686" y="444.4" width="3" height="2.2" fill="#e6bd25"/><path d="M690.9,443.7 l-2.9,3" stroke="#161616" stroke-width="1.1"/>
<text x="735.80" y="448.65" font-size="5.0" fill="#222" textLength="15.90" lengthAdjust="spacingAndGlyphs" stroke="#222" stroke-width="0.16">MMGS</text>
<path d="M771.9,446.6 h2.2 l-1.1,-1.3 z" fill="#222"/>
<ellipse cx="788.6" cy="446.7" rx="2.9" ry="2.1" fill="#e9e9e9" stroke="#3c3c3c" stroke-width="0.7"/><path d="M786.6,445.4 q2,-1.6 4,0.2" fill="none" stroke="#3c3c3c" stroke-width="0.6"/><circle cx="789.6" cy="446.2" r="0.6" fill="#3c3c3c"/>
</g>
<g id="dialog">
<rect x="99.4" y="64.4" width="209.4" height="337" rx="2.5" fill="#000" opacity="0.03"/>
<rect x="100.2" y="65" width="207.8" height="335.4" rx="2" fill="#000" opacity="0.05"/>
<rect x="101" y="65.6" width="206.2" height="333.6" rx="1.5" fill="#000" opacity="0.08"/>
<rect x="101.8" y="66.1" width="204.6" height="332.2" rx="1" fill="#000" opacity="0.13"/>
<rect x="102.4" y="66.5" width="203.3" height="330.9" fill="#000" opacity="0.25"/>
<rect x="102.9" y="66.9" width="202.3" height="329.9" fill="#ffffff"/>
<rect x="102.9" y="66.9" width="202.3" height="0.5" fill="#b9b9b9"/>
<rect x="106" y="70.2" width="6.9" height="6.7" rx="1.3" fill="#c7231e"/><path d="M106,74.2 h6.9 v1.5 q0,1.2 -1.2,1.2 h-4.5 q-1.2,0 -1.2,-1.2 z" fill="#262626"/>
<text x="107.00" y="74.59" font-size="3.4" fill="#fff" font-weight="bold" textLength="5.00" lengthAdjust="spacingAndGlyphs" stroke="#fff" stroke-width="0.05">84</text>
<text x="115.00" y="75.55" font-size="5.0" fill="#222" textLength="31.50" lengthAdjust="spacingAndGlyphs" stroke="#222" stroke-width="0.16">DStV Assistant</text>
<rect x="255.2" y="73.2" width="4.4" height="0.8" fill="#222"/>
<rect x="274.2" y="71.3" width="4.2" height="4.2" fill="none" stroke="#222" stroke-width="0.75"/>
<path d="M293.1,71.3 l4.3,4.3 M297.4,71.3 l-4.3,4.3" stroke="#111" stroke-width="0.85"/>
<rect x="105.3" y="82.5" width="197.6" height="311.8" fill="#fff" stroke="#c3c8d3" stroke-width="0.55"/>
<path d="M111.5,86.10000000000001 v2.6 h-2.6 z" fill="#151515"/>
<path d="M119.6,94.3 v2.6 h-2.6 z" fill="#151515"/>
<path d="M127.6,102.60000000000001 v2.6 h-2.6 z" fill="#151515"/>
<rect x="115.2" y="84.8" width="5.8" height="5.2" fill="#dfeaf4" stroke="#3f7ab3" stroke-width="0.6"/><path d="M115,85.2 h6.2" stroke="#2f6ea8" stroke-width="1.2"/><path d="M115.6,87.2 h5 M115.6,88.6 h5" stroke="#5b8fc2" stroke-width="0.6"/>
<text x="124.00" y="89.15" font-size="5.0" fill="#111" textLength="16.80" lengthAdjust="spacingAndGlyphs" stroke="#111" stroke-width="0.16">Baugr1</text>
<circle cx="125.4" cy="94.8" r="1.8" fill="#f6fafc" stroke="#7da7c9" stroke-width="0.6"/><line x1="126.6" y1="96.2" x2="128" y2="97.8" stroke="#7da7c9" stroke-width="0.7"/><path d="M126.4,94.6 l1,1.2 l2,-3" fill="none" stroke="#2ea043" stroke-width="0.8"/>
<text x="132.25" y="97.35" font-size="5.0" fill="#111" textLength="67.50" lengthAdjust="spacingAndGlyphs" stroke="#111" stroke-width="0.16">Identifizierte Volumenkörper</text>
<path d="M131.5,101.7 h5.6 M134.3,101.7 v4.4 M131.5,106.10000000000001 h5.6" stroke="#3a3a3a" stroke-width="1.4" fill="none"/>
<text x="140.10" y="105.65" font-size="5.0" fill="#111" textLength="0.90" lengthAdjust="spacingAndGlyphs" stroke="#111" stroke-width="0.16">I</text>
<rect x="137.8" y="108" width="24" height="8.2" fill="#0a74d6"/>
<path d="M140.5,109.89999999999999 h5.6 M143.3,109.89999999999999 v4.4 M140.5,114.3 h5.6" stroke="#3c4a5c" stroke-width="1.4" fill="none"/>
<text x="148.00" y="113.85" font-size="5.0" fill="#fff" textLength="12.60" lengthAdjust="spacingAndGlyphs" stroke="#fff" stroke-width="0.16">327-1</text>
</g>
</svg>
</body></html>
